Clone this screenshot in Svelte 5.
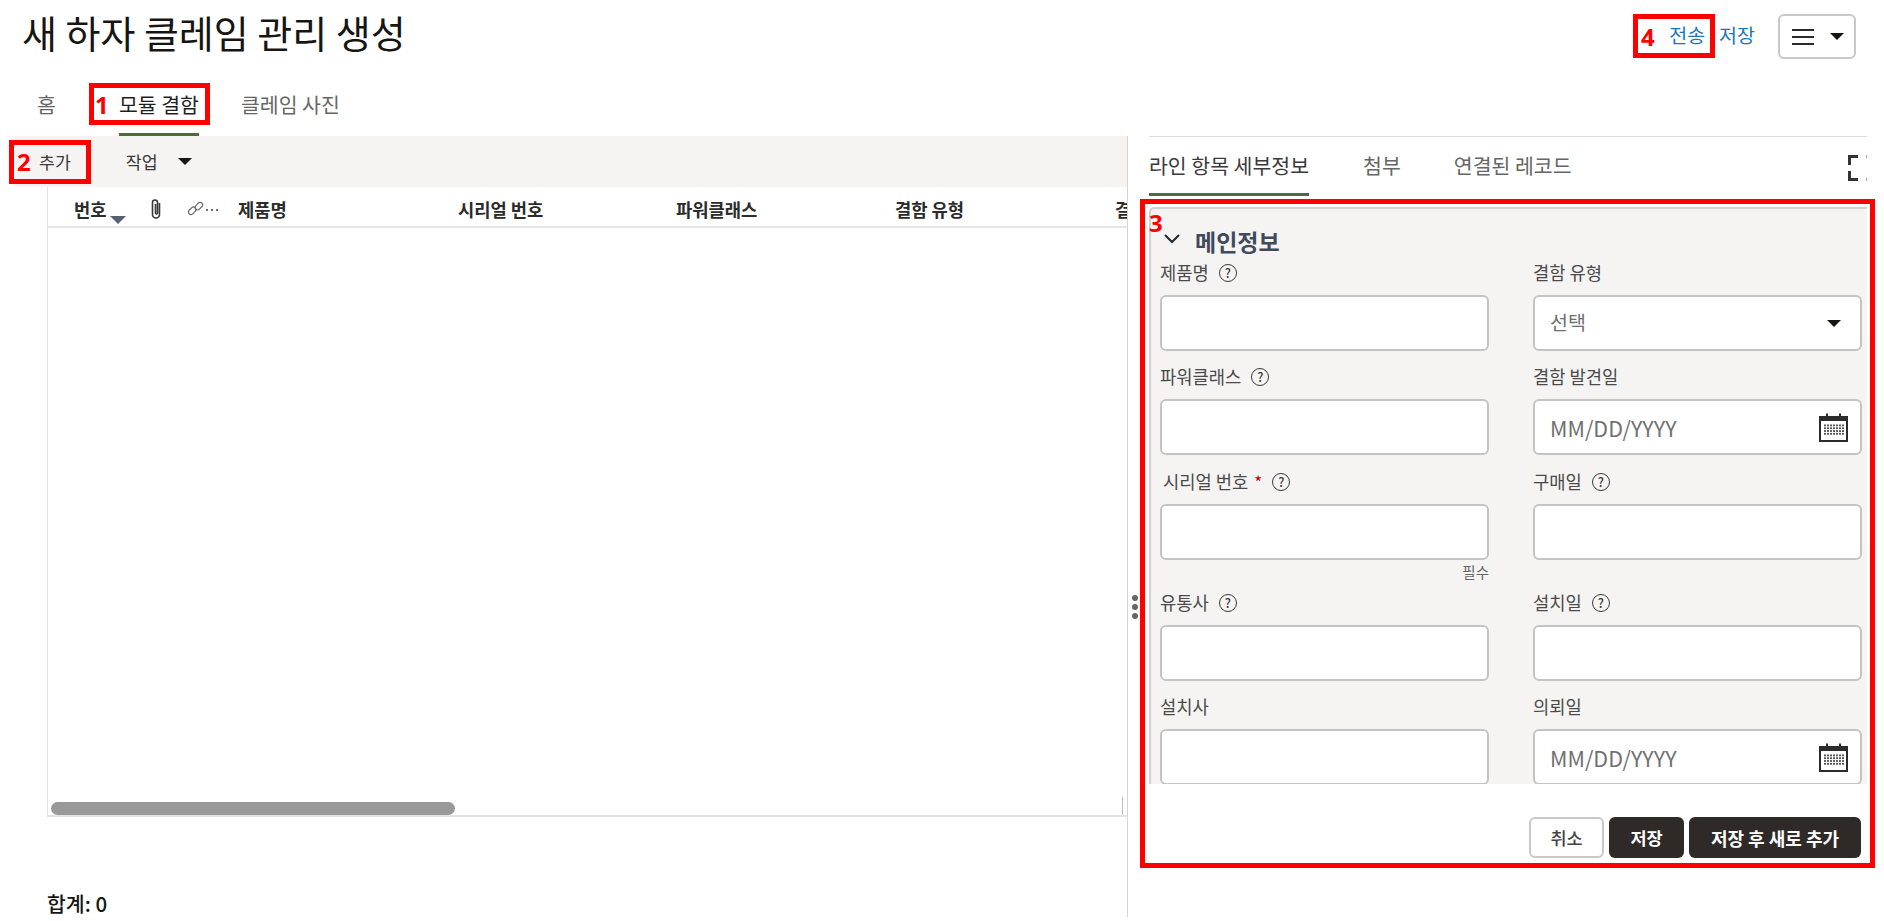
<script lang="ts">
  type Field = { label: string; help?: boolean; required?: boolean; kind?: 'select' | 'date'; hint?: string };

  const columns = [
    { name: '제품명', width: 220 },
    { name: '시리얼 번호', width: 218 },
    { name: '파워클래스', width: 219 },
    { name: '결함 유형', width: 220 },
    { name: '결함 발견일', width: 200 }
  ];

  const fields: Field[] = [
    { label: '제품명', help: true },
    { label: '결함 유형', kind: 'select' },
    { label: '파워클래스', help: true },
    { label: '결함 발견일', kind: 'date' },
    { label: '시리얼 번호', help: true, required: true, hint: '필수' },
    { label: '구매일', help: true },
    { label: '유통사', help: true },
    { label: '설치일', help: true },
    { label: '설치사' },
    { label: '의뢰일', kind: 'date' }
  ];

  const calendarDots: [number, number][] = [];
  for (let row = 0; row < 4; row++) {
    for (let col = 0; col < 7; col++) calendarDots.push([5 + col * 3, 11.5 + row * 2.8]);
  }
</script>

<div class="page">
  <header class="page-head">
    <h1 class="title">새 하자 클레임 관리 생성</h1>
    <div class="head-actions">
      <a class="link send" href="#send">전송</a>
      <a class="link" href="#save">저장</a>
      <button class="menu-btn" aria-label="메뉴">
        <span class="burger"><i></i><i></i><i></i></span>
        <span class="caret"></span>
      </button>
    </div>
  </header>

  <nav class="main-tabs">
    <span class="main-tab">홈</span>
    <span class="main-tab active">모듈 결함</span>
    <span class="main-tab">클레임 사진</span>
  </nav>

  <main class="split">
    <section class="left-pane">
      <div class="toolbar">
        <span class="tool-add">추가</span>
        <span class="tool-action">작업</span>
        <span class="caret"></span>
      </div>
      <div class="table">
        <div class="table-head">
          <span class="col-num">번호<span class="sort-arrow"></span></span>
          <span class="col-clip">
            <svg width="14" height="22" viewBox="0 0 14 22" fill="none" stroke="#3a3a3a" stroke-width="1.6">
              <path d="M10.5 5v11.5a3.5 3.5 0 0 1-7 0V4.5a2.5 2.5 0 0 1 5 0V15a1 1 0 0 1-2 0V6" />
            </svg>
          </span>
          <span class="col-link">
            <svg width="17" height="17" viewBox="0 0 17 17" fill="none" stroke="#666" stroke-width="1.2">
              <rect x="1" y="8.5" width="8.5" height="5" rx="2.5" transform="rotate(-45 5 11)" />
              <rect x="7.5" y="3.5" width="8.5" height="5" rx="2.5" transform="rotate(-45 12 6)" />
            </svg>
            <span class="dots-h"><i></i><i></i><i></i></span>
          </span>
          {#each columns as col}
            <span class="col-text" style={`width: ${col.width}px`}>{col.name}</span>
          {/each}
        </div>
        <div class="table-foot">
          <div class="thumb"></div>
          <div class="end-tick"></div>
        </div>
      </div>
      <div class="total">합계: 0</div>
    </section>

    <div class="splitter">
      <span class="grip"><i></i><i></i><i></i></span>
    </div>

    <section class="right-pane">
      <div class="detail-tabs">
        <span class="detail-tab active">라인 항목 세부정보</span>
        <span class="detail-tab attach">첨부</span>
        <span class="detail-tab linked">연결된 레코드</span>
        <span class="expand"><i class="tl"></i><i class="bl"></i><i class="tr"></i><i class="br"></i></span>
      </div>

      <div class="form-panel">
        <div class="section-head">
          <svg class="chevron" width="18" height="11" viewBox="0 0 18 11" fill="none" stroke="#1d2530" stroke-width="2">
            <path d="M2 2l7 7 7-7" />
          </svg>
          <span>메인정보</span>
        </div>
        <div class="form-grid">
          {#each fields as field}
            <div class="field">
              <div class="label-row" class:indented={field.required}>
                <span>{field.label}</span>
                {#if field.required}<span class="req">*</span>{/if}
                {#if field.help}<span class="help">?</span>{/if}
              </div>
              <div class="control" class:select={field.kind === 'select'}>
                {#if field.kind === 'select'}
                  <span class="value choice">선택</span>
                  <span class="caret"></span>
                {:else if field.kind === 'date'}
                  <span class="value date">MM/DD/YYYY</span>
                  <svg width="29" height="29" viewBox="0 0 29 29" fill="none">
                    <rect x="1" y="4" width="27" height="24" fill="#fff" stroke="#2b2b2b" stroke-width="2" />
                    <rect x="1" y="4" width="27" height="4" fill="#2b2b2b" />
                    <path d="M8 0.5v6M21 0.5v6" stroke="#2b2b2b" stroke-width="2" />
                    {#each calendarDots as dot}
                      <rect x={dot[0]} y={dot[1]} width="2" height="1.8" fill="#555" />
                    {/each}
                  </svg>
                {/if}
              </div>
              {#if field.hint}<div class="hint">{field.hint}</div>{/if}
            </div>
          {/each}
        </div>
      </div>

      <div class="form-actions">
        <button class="btn cancel">취소</button>
        <button class="btn dark save">저장</button>
        <button class="btn dark save-new">저장 후 새로 추가</button>
      </div>
    </section>
  </main>

  <!-- red callouts drawn over the screenshot -->
  <div class="callout c1"><b>1</b></div>
  <div class="callout c2"><b>2</b></div>
  <div class="callout c3"><b>3</b></div>
  <div class="callout c4"><b>4</b></div>
</div>

<style>
  :global(body) {
    margin: 0;
    background: #fff;
  }

  .page {
    position: relative;
    width: 1884px;
    height: 921px;
    overflow: hidden;
    font-family: "Noto Sans CJK KR", "Noto Sans", sans-serif;
    color: #2b2b2b;
  }

  .page-head {
    display: flex;
    justify-content: space-between;
    height: 70px;
    padding: 0 28px 0 22px;
    box-sizing: border-box;
  }

  .title {
    margin: 9px 0 0;
    font-size: 38px;
    line-height: 46px;
    font-weight: 400;
    color: #161513;
  }

  .head-actions {
    display: flex;
    align-items: flex-start;
    padding-top: 14px;
  }

  .link {
    margin-top: 9px;
    color: #1a76b8;
    font-size: 19.5px;
    line-height: 24px;
    text-decoration: none;
  }

  .send {
    margin-right: 14px;
  }

  .menu-btn {
    display: flex;
    align-items: center;
    gap: 16px;
    width: 78px;
    height: 45px;
    margin-left: 23px;
    padding: 0 0 0 12px;
    background: #fff;
    border: 2px solid #c8c8c8;
    border-radius: 6px;
    box-sizing: border-box;
  }

  .burger {
    display: flex;
    flex-direction: column;
    gap: 5px;
    width: 22px;
  }

  .burger i {
    height: 2px;
    background: #2b2b2b;
  }

  .caret {
    display: inline-block;
    width: 0;
    height: 0;
    border-left: 7px solid transparent;
    border-right: 7px solid transparent;
    border-top: 7px solid #161513;
  }

  .main-tabs {
    display: flex;
    height: 66px;
    padding-left: 37px;
    box-sizing: border-box;
  }

  .main-tab {
    height: 66px;
    padding-top: 21px;
    box-sizing: border-box;
    font-size: 20.5px;
    line-height: 27px;
    color: #666;
  }

  .main-tab:nth-child(2) {
    margin-left: 63px;
  }

  .main-tab:nth-child(3) {
    margin-left: 42px;
  }

  .main-tab.active {
    color: #1f1f1f;
    border-bottom: 3px solid #4f6b3a;
  }

  .split {
    display: grid;
    grid-template-columns: 1127px 1px 1fr;
    height: 775px;
  }

  .left-pane {
    display: flex;
    flex-direction: column;
    min-width: 0;
  }

  .toolbar {
    display: flex;
    align-items: center;
    height: 51px;
    margin-left: 15px;
    background: #f5f4f2;
    font-size: 17.3px;
    color: #3a3a3a;
  }

  .tool-add {
    margin-left: 24px;
  }

  .tool-action {
    margin-left: 55px;
    margin-right: 20px;
  }

  .table {
    display: flex;
    flex-direction: column;
    height: 630px;
    margin-left: 47px;
    border-left: 1px solid #e2e2e2;
    overflow: hidden;
  }

  .table-head {
    display: flex;
    align-items: center;
    flex: none;
    height: 35px;
    padding: 4px 0 0 26px;
    border-bottom: 2px solid #e4e4e4;
    font-size: 17.7px;
    font-weight: 700;
    color: #2b2b2b;
    white-space: nowrap;
  }

  .table-head > span {
    flex: none;
  }

  .col-num {
    position: relative;
    width: 75px;
  }

  .sort-arrow {
    position: absolute;
    left: 36px;
    top: 20px;
    border-left: 8px solid transparent;
    border-right: 8px solid transparent;
    border-top: 8px solid #566070;
  }

  .col-clip {
    display: flex;
    width: 38px;
  }

  .col-link {
    display: flex;
    align-items: center;
    width: 51px;
  }

  .dots-h {
    display: flex;
    gap: 3px;
    margin: 2px 0 0 2px;
  }

  .dots-h i {
    width: 2px;
    height: 2px;
    background: #444;
    border-radius: 50%;
  }

  .table-foot {
    display: flex;
    justify-content: space-between;
    align-items: flex-end;
    margin-top: auto;
    padding: 0 4px 0 3px;
    border-bottom: 2px solid #e4e4e4;
  }

  .thumb {
    width: 404px;
    height: 13px;
    background: #999;
    border-radius: 7px;
  }

  .end-tick {
    width: 1px;
    height: 18px;
    background: #bbb;
  }

  .total {
    margin: 72px 0 0 47px;
    font-size: 20.5px;
    line-height: 28px;
    font-weight: 500;
    color: #161513;
  }

  .splitter {
    position: relative;
    background: #d4d4d4;
  }

  .grip {
    position: absolute;
    left: 5px;
    top: 459px;
    display: flex;
    flex-direction: column;
    gap: 3px;
  }

  .grip i {
    width: 6px;
    height: 6px;
    border-radius: 50%;
    background: #666;
  }

  .right-pane {
    display: flex;
    flex-direction: column;
    margin: 0 17px 0 21px;
    min-width: 0;
    overflow: hidden;
  }

  .detail-tabs {
    position: relative;
    display: flex;
    flex: none;
    height: 60px;
    border-top: 1px solid #d9dde3;
    box-sizing: border-box;
    font-size: 20.5px;
    color: #666;
  }

  .detail-tab {
    height: 59px;
    padding-top: 14px;
    box-sizing: border-box;
    line-height: 28px;
  }

  .detail-tab.active {
    color: #3a3a3a;
    border-bottom: 3px solid #4f6b3a;
  }

  .attach {
    margin-left: 54px;
  }

  .linked {
    margin-left: 53px;
  }

  .expand {
    position: absolute;
    left: 699px;
    top: 18px;
    width: 28px;
    height: 26px;
  }

  .expand i {
    position: absolute;
    width: 7px;
    height: 7px;
    border: 0 solid #333;
  }

  .tl {
    left: 0;
    top: 0;
    border-width: 3px 0 0 3px !important;
  }

  .bl {
    left: 0;
    bottom: 0;
    border-width: 0 0 3px 3px !important;
  }

  .expand .tr {
    right: 0;
    top: 0;
    border-color: #aaa;
    border-width: 3px 3px 0 0 !important;
  }

  .expand .br {
    right: 0;
    bottom: 0;
    border-color: #aaa;
    border-width: 0 3px 3px 0 !important;
  }

  .form-panel {
    flex: none;
    height: 577px;
    margin-top: 11px;
    padding-left: 11px;
    background: #f5f4f2;
    border-top: 2px solid #d2d2d2;
    border-left: 2px solid #d2d2d2;
    border-top-left-radius: 5px;
    box-sizing: border-box;
    overflow: hidden;
  }

  .section-head {
    display: flex;
    align-items: center;
    gap: 14px;
    height: 53px;
    padding: 10px 0 0 1px;
    box-sizing: border-box;
    font-size: 23px;
    font-weight: 700;
    color: #3f4b5c;
  }

  .chevron {
    margin-top: -4px;
  }

  .form-grid {
    display: grid;
    grid-template-columns: 329px 329px;
    grid-template-rows: 104px 105px 121px 104px 104px;
    column-gap: 44px;
    margin-left: -2px;
  }

  .label-row {
    display: flex;
    align-items: center;
    gap: 10px;
    height: 20px;
    margin-bottom: 13px;
    font-size: 17.7px;
    color: #4a4a4a;
    white-space: nowrap;
  }

  .label-row.indented {
    padding-left: 3px;
  }

  .req {
    margin-left: -4px;
    color: #c00;
    font-size: 17px;
  }

  .help {
    display: flex;
    align-items: center;
    justify-content: center;
    flex: none;
    width: 18px;
    height: 18px;
    margin-top: 2px;
    border: 1.5px solid #3a3a3a;
    border-radius: 50%;
    box-sizing: border-box;
    font-size: 12.5px;
    font-weight: 500;
    line-height: 1;
    color: #3a3a3a;
  }

  .control {
    display: flex;
    align-items: center;
    justify-content: space-between;
    height: 56px;
    padding: 0 12px 0 15px;
    background: #fff;
    border: 2px solid #c4c4c4;
    border-radius: 6px;
    box-sizing: border-box;
  }

  .control.select {
    padding-right: 19px;
  }

  .value {
    font-size: 19.5px;
    color: #707070;
  }

  .value.choice {
    margin-top: -4px;
  }

  .value.date {
    font-size: 21.5px;
  }

  .hint {
    margin-top: 3px;
    text-align: right;
    font-size: 14.5px;
    line-height: 18px;
    color: #666;
  }

  .form-actions {
    display: flex;
    justify-content: flex-end;
    gap: 5px;
    margin-top: 33px;
    padding-right: 6px;
  }

  .btn {
    height: 41px;
    padding: 0;
    border-radius: 6px;
    box-sizing: border-box;
    font-family: inherit;
    font-size: 17.5px;
    font-weight: 500;
  }

  .cancel {
    width: 75px;
    background: #fff;
    border: 2px solid #c8c8c8;
    color: #444;
  }

  .dark {
    background: #2f2a27;
    border: 0;
    color: #fff;
    font-weight: 700;
  }

  .save {
    width: 75px;
  }

  .save-new {
    width: 172px;
    font-size: 18px;
  }

  .callout {
    position: absolute;
    box-sizing: border-box;
    border: 5px solid #f00;
    color: #f00;
    pointer-events: none;
    font-family: "Noto Sans", sans-serif;
  }

  .callout b {
    position: absolute;
    font-size: 24px;
    line-height: 28px;
    font-weight: 700;
  }

  .c1 {
    left: 89px;
    top: 83px;
    width: 121px;
    height: 42px;
  }

  .c1 b {
    left: 1px;
    top: 3px;
  }

  .c2 {
    left: 9px;
    top: 140px;
    width: 82px;
    height: 44px;
  }

  .c2 b {
    left: 3px;
    top: 3px;
  }

  .c3 {
    left: 1140px;
    top: 199px;
    width: 735px;
    height: 669px;
  }

  .c3 b {
    left: 4px;
    top: 5px;
  }

  .c4 {
    left: 1633px;
    top: 14px;
    width: 82px;
    height: 44px;
  }

  .c4 b {
    left: 3px;
    top: 4px;
  }
</style>
